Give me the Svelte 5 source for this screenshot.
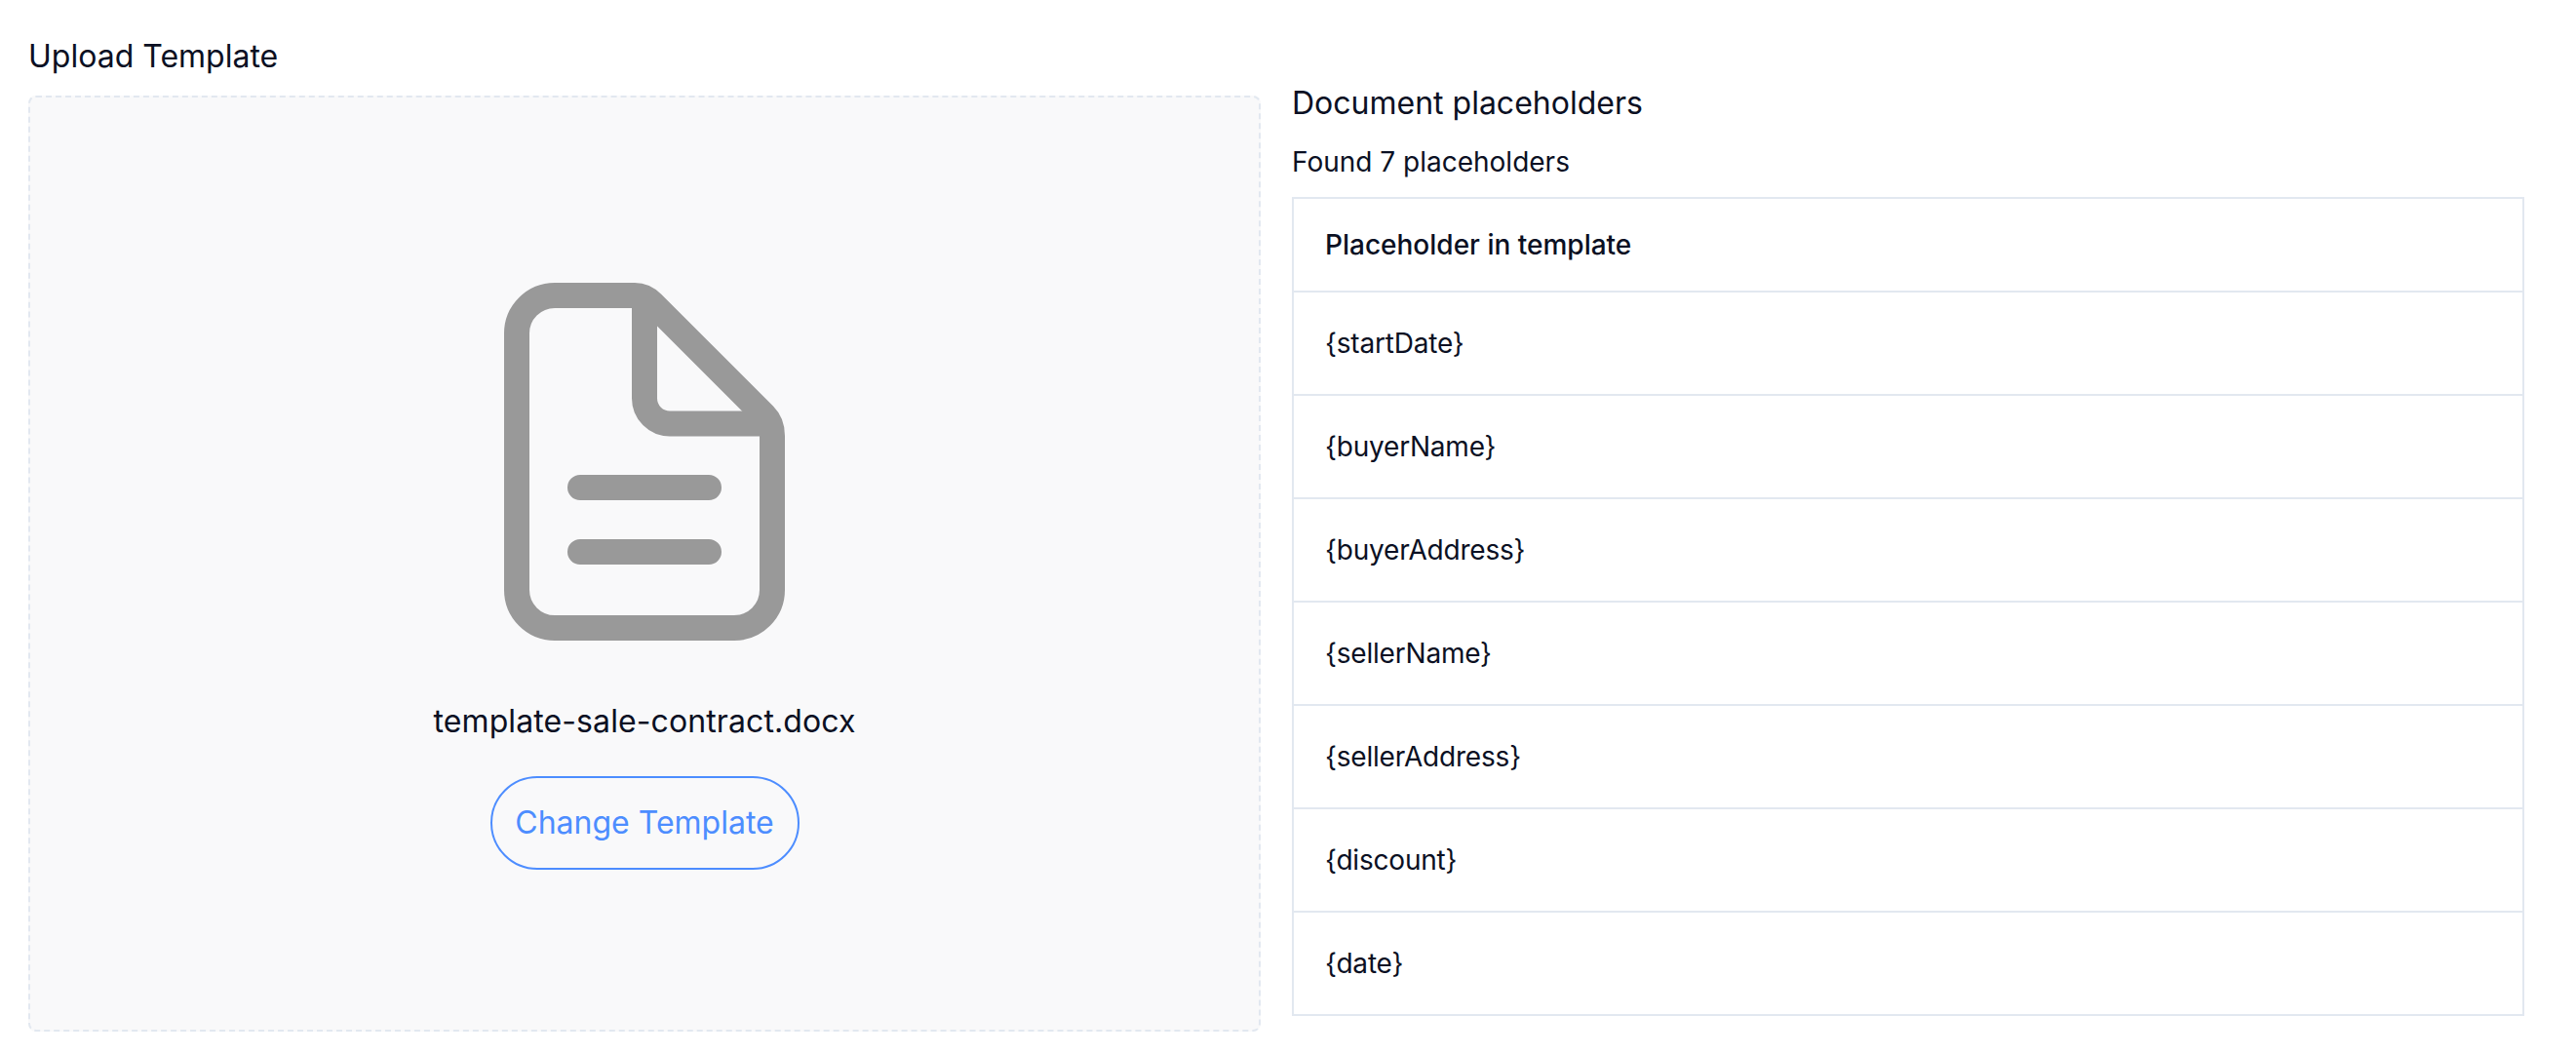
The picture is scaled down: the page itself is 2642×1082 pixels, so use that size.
<script>
  const placeholders = ['startDate', 'buyerName', 'buyerAddress', 'sellerName', 'sellerAddress', 'discount', 'date']
</script>

<div class="page">
  <section class="upload">
    <h2 class="upload-label">Upload Template</h2>
    <div class="dropzone">
      <svg class="file-icon" viewBox="517 290 288 367" fill="none" stroke="#999999" stroke-width="26" stroke-linecap="round" aria-hidden="true">
        <path d="M569 303H651Q661 303 669 311L784 426Q792 434 792 447V605A39 39 0 0 1 753 644H569A39 39 0 0 1 530 605V342A39 39 0 0 1 569 303Z"/>
        <path d="M661 303V408.500A26 26 0 0 0 687 434.500H792" stroke-linecap="butt"/>
        <path d="M595 500H727M595 566H727"/>
      </svg>
      <p class="file-name">template-sale-contract.docx</p>
      <button class="change-btn">Change Template</button>
    </div>
  </section>

  <section class="details">
    <h3 class="details-title">Document placeholders</h3>
    <p class="details-count">Found {placeholders.length} placeholders</p>
    <table class="ph-table">
      <thead>
        <tr><th>Placeholder in template</th></tr>
      </thead>
      <tbody>
        {#each placeholders as name}
          <tr><td>{'{' + name + '}'}</td></tr>
        {/each}
      </tbody>
    </table>
  </section>
</div>

<style>
  :global(body) {
    margin: 0;
    background: #fff;
  }
  .page {
    display: grid;
    grid-template-columns: 1264px 1264px;
    column-gap: 32px;
    padding: 0 53px 0 29px;
    width: 2560px;
    height: 1082px;
    font-family: Inter, "Liberation Sans", sans-serif;
    color: #0b1023;
  }
  .upload-label {
    margin: 0;
    padding-top: 38px;
    box-sizing: border-box;
    font-size: 32px;
    line-height: 40px;
    font-weight: 400;
    height: 98px;
  }
  .dropzone {
    box-sizing: border-box;
    height: 960px;
    border: 2px dashed #e2e8f0;
    border-radius: 8px;
    background: #f9f9fa;
    display: flex;
    flex-direction: column;
    align-items: center;
    padding-top: 190px;
  }
  .file-icon {
    width: 288px;
    height: 367px;
    display: block;
  }
  .file-name {
    margin: 62px 0 0;
    font-size: 32px;
    line-height: 42px;
    letter-spacing: 0.1px;
  }
  .change-btn {
    margin-top: 35px;
    width: 317px;
    height: 96px;
    border: 2px solid #4d8dff;
    border-radius: 48px;
    background: transparent;
    color: #4d8dff;
    font: inherit;
    font-size: 32px;
    padding: 0 0 2px;
  }
  .details-title {
    margin: 0;
    padding-top: 85px;
    font-size: 32px;
    line-height: 42px;
    font-weight: 400;
  }
  .details-count {
    margin: 20px 0 0;
    font-size: 28px;
    line-height: 38px;
  }
  .ph-table {
    margin-top: 17px;
    width: 100%;
    border-collapse: collapse;
    font-size: 28px;
  }
  .ph-table th,
  .ph-table td {
    border: 2px solid #e2e8f0;
    padding: 0 0 0 32px;
    text-align: left;
  }
  .ph-table th {
    height: 94px;
    font-weight: 500;
  }
  .ph-table td {
    height: 104px;
    font-weight: 400;
    letter-spacing: -0.2px;
  }
</style>
